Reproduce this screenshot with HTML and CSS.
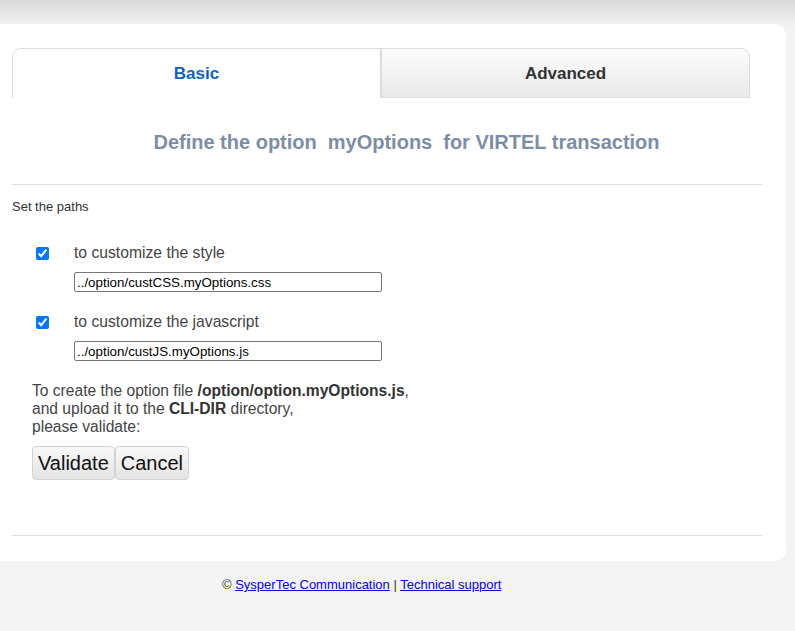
FILE: index.html
```html
<!DOCTYPE html>
<html lang="en">
<head>
<meta charset="utf-8">
<title>Define option</title>
<link rel="stylesheet" href="styles.css">
</head>
<body>
<div class="page">
  <div class="card">
    <div class="tabs">
      <div class="tab tab-active">Basic</div>
      <div class="tab tab-inactive">Advanced</div>
    </div>
    <h1 class="title"><span>Define the option</span><span class="sep">myOptions</span><span>for VIRTEL transaction</span></h1>
    <hr class="rule">
    <div class="section-label">Set the paths</div>
    <div class="options">
      <div class="opt">
        <input type="checkbox" class="chk" checked>
        <label class="opt-label">to customize the style</label>
        <input type="text" class="path" value="../option/custCSS.myOptions.css">
      </div>
      <div class="opt">
        <input type="checkbox" class="chk" checked>
        <label class="opt-label">to customize the javascript</label>
        <input type="text" class="path" value="../option/custJS.myOptions.js">
      </div>
    </div>
    <p class="note">To create the option file <b>/option/option.myOptions.js</b>,<br>and upload it to the <b>CLI-DIR</b> directory,<br>please validate:</p>
    <div class="buttons">
      <button class="btn">Validate</button><button class="btn">Cancel</button>
    </div>
    <hr class="rule rule-bottom">
  </div>
  <div class="footer">© <a href="#">SysperTec Communication</a> | <a href="#">Technical support</a></div>
</div>
</body>
</html>
```

FILE: styles.css
```css
html, body {
  margin: 0;
  padding: 0;
}
body {
  background: #f3f3f3 linear-gradient(#d9d9d9, #f2f2f2 26px, #f3f3f3) no-repeat top / 100% 40px;
  font-family: "Liberation Sans", Arial, sans-serif;
  color: #444;
  min-height: 631px;
}
.page {
  padding-top: 24px;
}
.card {
  width: 750px;
  background: #fff;
  border-radius: 0 12px 12px 0;
  padding: 24px 24px 25px 12px;
}
.tabs {
  display: flex;
  width: 738px;
  height: 50px;
}
.tab {
  flex: 1;
  display: flex;
  align-items: center;
  justify-content: center;
  font-size: 17px;
  font-weight: bold;
  box-sizing: border-box;
}
.tab-active {
  color: #0a64c8;
  background: #fff;
  border-top: 1px solid #ddd;
  border-left: 1px solid #ddd;
  border-top-left-radius: 9px;
}
.tab-inactive {
  color: #333;
  background: linear-gradient(#fcfcfc, #e9e9e9);
  border: 1px solid #dcdcdc;
  border-left: 2px solid #dcdcdc;
  border-top-right-radius: 9px;
  padding-top: 2px;
}
.title {
  margin: 32px 0 0;
  padding-left: 39px;
  text-align: center;
  font-size: 20px;
  line-height: 24px;
  font-weight: bold;
  color: #7b8ea5;
}
.title .sep {
  margin: 0 11px;
}
.rule {
  margin: 30px 0 0;
  border: 0;
  border-top: 1px solid #ddd;
  height: 0;
}
.section-label {
  margin-top: 14px;
  font-size: 13px;
  line-height: 16px;
  color: #333;
}
.options {
  margin-top: 29px;
  display: flex;
  flex-direction: column;
  gap: 21px;
}
.opt {
  display: grid;
  grid-template-columns: 38px 1fr;
  grid-template-rows: 18px 20px;
  row-gap: 10px;
  padding-left: 24px;
  align-items: center;
}
.chk {
  margin: 0;
  width: 13px;
  height: 13px;
}
.opt-label {
  font-size: 15.7px;
  line-height: 18px;
}
.path {
  grid-column: 2;
  width: 308px;
  height: 20px;
  box-sizing: border-box;
  margin: 0;
  padding: 1px 2px;
  font-family: "Liberation Sans", Arial, sans-serif;
  font-size: 13.33px;
  color: #000;
  border: 1px solid #767676;
  border-radius: 2px;
}
.note {
  margin: 21px 0 0 20px;
  font-size: 15.6px;
  line-height: 18px;
  color: #444;
}
.note b {
  color: #333;
}
.buttons {
  display: flex;
  margin: 10px 0 0 20px;
}
.btn {
  font-family: "Liberation Sans", Arial, sans-serif;
  font-size: 20px;
  height: 34px;
  padding: 0 5px;
  color: #111;
  background: linear-gradient(#f8f8f8, #e4e4e4);
  border: 1px solid #d2d2d2;
  border-radius: 4px;
  margin: 0;
}
.rule-bottom {
  margin-top: 55px;
}
.footer {
  padding: 16px 0 0 222px;
  font-size: 13px;
  line-height: 16px;
  color: #333;
}
.footer a {
  color: #0000ee;
}
```
